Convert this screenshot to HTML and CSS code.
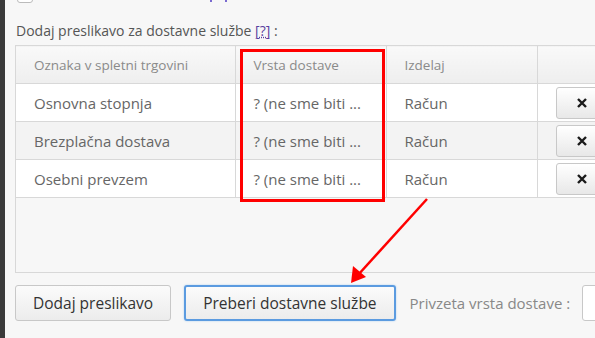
FILE: index.html
```html
<!DOCTYPE html>
<html lang="sl">
<head>
    <meta charset="UTF-8">
    <meta name="viewport" content="width=device-width, initial-scale=1.0">
    <title>Preslikava dostavnih služb</title>
    <link rel="stylesheet" href="styles.css">
</head>
<body>
    <div class="sidebar"></div>
    <div class="main">
        <div class="top-row">
            <span class="checkbox"></span>
            <span class="help-mark"></span>
        </div>

        <p class="section-label">Dodaj preslikavo za dostavne službe <a class="help" href="#">[?]</a> :</p>

        <div class="mapping-box">
            <table class="mapping-table">
                <thead>
                    <tr>
                        <th class="col-name">Oznaka v spletni trgovini</th>
                        <th class="col-type">Vrsta dostave</th>
                        <th class="col-doc">Izdelaj</th>
                        <th class="col-action"></th>
                    </tr>
                </thead>
                <tbody>
                    <tr>
                        <td>Osnovna stopnja</td>
                        <td>? (ne sme biti ...</td>
                        <td>Račun</td>
                        <td><button class="remove-btn"><svg width="12" height="12" viewBox="0 0 12 12"><path d="M2 2 L10 10 M10 2 L2 10" stroke="#1a1a1a" stroke-width="2.4"/></svg></button></td>
                    </tr>
                    <tr class="alt">
                        <td>Brezplačna dostava</td>
                        <td>? (ne sme biti ...</td>
                        <td>Račun</td>
                        <td><button class="remove-btn"><svg width="12" height="12" viewBox="0 0 12 12"><path d="M2 2 L10 10 M10 2 L2 10" stroke="#1a1a1a" stroke-width="2.4"/></svg></button></td>
                    </tr>
                    <tr>
                        <td>Osebni prevzem</td>
                        <td>? (ne sme biti ...</td>
                        <td>Račun</td>
                        <td><button class="remove-btn"><svg width="12" height="12" viewBox="0 0 12 12"><path d="M2 2 L10 10 M10 2 L2 10" stroke="#1a1a1a" stroke-width="2.4"/></svg></button></td>
                    </tr>
                </tbody>
            </table>
        </div>

        <div class="actions">
            <button class="btn">Dodaj preslikavo</button>
            <button class="btn btn-focus">Preberi dostavne službe</button>
            <span class="default-label">Privzeta vrsta dostave :</span>
            <span class="select-box"></span>
        </div>
    </div>

    <!-- oznake na posnetku -->
    <div class="highlight"></div>
    <svg class="arrow" width="595" height="338" viewBox="0 0 595 338">
        <line x1="427" y1="199" x2="358" y2="275" stroke="#f00" stroke-width="2.5"/>
        <polygon points="351,283 353,266 366,277" fill="#f00"/>
    </svg>
</body>
</html>
```

FILE: styles.css
```css
* {
    box-sizing: border-box;
    margin: 0;
    padding: 0;
}

body {
    display: flex;
    font-family: 'Open Sans', 'Noto Sans', sans-serif;
    background-color: #f7f7f7;
    min-height: 100vh;
    overflow: hidden;
}

.sidebar {
    flex: 0 0 5px;
    background-color: #3a3a3a;
}

.main {
    flex: 0 0 auto;
    width: 700px;
    padding-left: 10px;
}

.top-row {
    display: flex;
    align-items: flex-end;
    height: 3px;
    overflow: hidden;
    padding-left: 2px;
}

.checkbox {
    display: block;
    width: 16px;
    height: 16px;
    border: 1px solid #bbb;
    border-radius: 3px;
    background: #fff;
    flex: 0 0 auto;
}

.help-mark {
    display: block;
    width: 17px;
    height: 2px;
    margin: 0 0 1px 177px;
    border-left: 2px solid #7a6ad0;
    border-right: 2px solid #7a6ad0;
}

.help {
    color: #5a3fa0;
    text-decoration: underline dotted;
}

.section-label {
    margin-top: 18px;
    margin-left: 1px;
    font-size: 14px;
    line-height: 19px;
    color: #555;
}

.mapping-box {
    margin-top: 5px;
    height: 228px;
    border-left: 1px solid #d8d8d8;
    border-bottom: 1px solid #d8d8d8;
}

.mapping-table {
    border-collapse: collapse;
    table-layout: fixed;
    width: 680px;
}

.mapping-table th,
.mapping-table td {
    height: 38px;
    padding: 0 18px;
    text-align: left;
    border: 1px solid #d8d8d8;
    border-left: none;
    white-space: nowrap;
    overflow: hidden;
}

.mapping-table th {
    font-weight: normal;
    font-size: 13.5px;
    color: #8a8a8a;
    background: linear-gradient(#f9f9f9, #eeeeee);
}

.mapping-table td {
    font-size: 15px;
    color: #666;
    background-color: #fff;
}

.mapping-table tr.alt td {
    background-color: #f3f3f3;
}

.col-name {
    width: 219px;
}

.col-type,
.col-doc {
    width: 151px;
}

.mapping-table td:last-child {
    padding: 0 0 0 18px;
}

.remove-btn {
    display: flex;
    align-items: center;
    justify-content: center;
    width: 52px;
    height: 32px;
    border: 1px solid #c8c8c8;
    border-radius: 3px;
    background: linear-gradient(#ffffff, #e8e8e8);
}

.actions {
    display: flex;
    align-items: center;
    margin-top: 12px;
}

.btn {
    height: 36px;
    padding: 0 17px;
    border: 1px solid #c8c8c8;
    border-radius: 3px;
    background: linear-gradient(#fbfbfb, #ececec);
    font-family: inherit;
    font-size: 15.5px;
    color: #333;
}

.btn-focus {
    margin-left: 13px;
    border: 2px solid #5b9be0;
    box-shadow: 0 0 2px #a9ccf0;
}

.default-label {
    margin-left: 14px;
    font-size: 15px;
    color: #888;
}

.select-box {
    display: block;
    margin-left: 12px;
    width: 80px;
    height: 36px;
    border: 1px solid #c8c8c8;
    border-radius: 3px;
    background: #fff;
}

.highlight {
    position: absolute;
    left: 240px;
    top: 49px;
    width: 145px;
    height: 153px;
    border: 3px solid #f00;
}

.arrow {
    position: absolute;
    left: 0;
    top: 0;
}
```
